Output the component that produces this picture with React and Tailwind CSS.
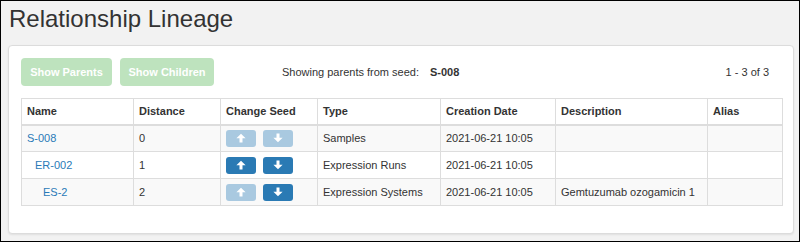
import React from 'react';

const rows = [
    { name: 'S-008', indent: 'pl-[5px]', distance: '0', up: false, down: false, type: 'Samples', date: '2021-06-21 10:05', desc: '', striped: true },
    { name: 'ER-002', indent: 'pl-[13px]', distance: '1', up: true, down: true, type: 'Expression Runs', date: '2021-06-21 10:05', desc: '', striped: false },
    { name: 'ES-2', indent: 'pl-[21px]', distance: '2', up: false, down: true, type: 'Expression Systems', date: '2021-06-21 10:05', desc: 'Gemtuzumab ozogamicin 1', striped: true },
];

const cols = [
    { label: 'Name', w: 'w-[112px]' },
    { label: 'Distance', w: 'w-[87px]' },
    { label: 'Change Seed', w: 'w-[97px]' },
    { label: 'Type', w: 'w-[123px]' },
    { label: 'Creation Date', w: 'w-[115px]' },
    { label: 'Description', w: 'w-[152px]' },
    { label: 'Alias', w: 'w-[75px]' },
];

const Arrow = ({ dir }) => (
    <svg width="10" height="10" viewBox="0 0 10 10" fill="white">
        {dir === 'up'
            ? <path d="M5 0.8 L9.6 5.2 L6.5 5.2 L6.5 9.4 L3.5 9.4 L3.5 5.2 L0.4 5.2 Z" />
            : <path d="M5 9.2 L9.6 4.8 L6.5 4.8 L6.5 0.6 L3.5 0.6 L3.5 4.8 L0.4 4.8 Z" />}
    </svg>
);

const SeedButton = ({ dir, active }) => (
    <button className={`w-[30px] h-[17px] rounded-[3px] flex items-center justify-center ${active ? 'bg-[#2a7ab4]' : 'bg-[#a9c9e0]'}`}>
        <Arrow dir={dir} />
    </button>
);

export default function App() {
    return (
        <div className="w-[800px] h-[242px] border border-black bg-[#f2f2f2] text-[#333] font-['Liberation_Sans',Arial,sans-serif] flex flex-col overflow-hidden">
            <h1 className="text-[24px] leading-[26px] pl-[8px] pt-[5px] text-[#333]">Relationship Lineage</h1>
            <div className="mt-[13px] ml-[7px] w-[786px] h-[189px] bg-white border border-[#dcdcdc] rounded-[4px] shadow-[0_1px_2px_rgba(0,0,0,0.08)] px-[12px] pt-[12px]">
                {/* toolbar */}
                <div className="flex items-center h-[28px]">
                    <button className="h-[28px] w-[91px] rounded-[4px] bg-[#bee3be] text-white text-[11px] font-bold">Show Parents</button>
                    <button className="h-[28px] w-[94px] ml-[8px] rounded-[4px] bg-[#bee3be] text-white text-[11px] font-bold">Show Children</button>
                    <div className="ml-[68px] text-[11px] flex items-center">
                        <span className="w-[148px]">Showing parents from seed:</span>
                        <span className="font-bold">S-008</span>
                    </div>
                    <div className="ml-auto mr-[12px] text-[11px]">1 - 3 of 3</div>
                </div>

                {/* table */}
                <table className="mt-[12px] border-collapse text-[11px] table-fixed w-[761px]">
                    <thead>
                        <tr className="h-[26px]">
                            {cols.map((c) => (
                                <th key={c.label} className={`${c.w} border border-[#ddd] border-b-2 text-left font-bold px-[5px] align-middle`}>{c.label}</th>
                            ))}
                        </tr>
                    </thead>
                    <tbody>
                        {rows.map((r) => (
                            <tr key={r.name} className={`h-[27px] ${r.striped ? 'bg-[#f9f9f9]' : 'bg-white'}`}>
                                <td className={`border border-[#ddd] ${r.indent} pr-[5px]`}>
                                    <a className="text-[#2a7ab8]">{r.name}</a>
                                </td>
                                <td className="border border-[#ddd] px-[5px]">{r.distance}</td>
                                <td className="border border-[#ddd] px-[5px]">
                                    <div className="flex gap-[7px]">
                                        <SeedButton dir="up" active={r.up} />
                                        <SeedButton dir="down" active={r.down} />
                                    </div>
                                </td>
                                <td className="border border-[#ddd] px-[5px]">{r.type}</td>
                                <td className="border border-[#ddd] px-[5px]">{r.date}</td>
                                <td className="border border-[#ddd] px-[5px]">{r.desc}</td>
                                <td className="border border-[#ddd] px-[5px]"></td>
                            </tr>
                        ))}
                    </tbody>
                </table>
            </div>
        </div>
    );
}
